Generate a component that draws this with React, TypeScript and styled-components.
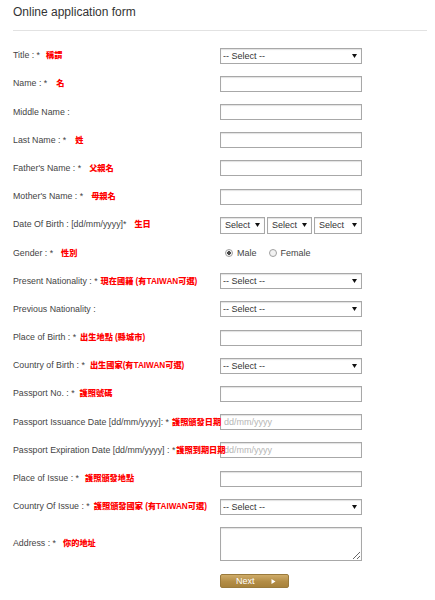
import React from 'react';
import styled, { createGlobalStyle } from 'styled-components';

const GlobalStyle = createGlobalStyle`
  html, body { margin: 0; padding: 0; background: #fff; }
  body {
    font-family: "Liberation Sans", Arial, "Noto Sans CJK TC", sans-serif;
    color: #444;
  }
`;

const Page = styled.div`
  width: 435px;
  box-sizing: border-box;
  padding: 0 8px 20px 13px;
`;

const Heading = styled.h2`
  margin: 0;
  padding: 4px 0 9px;
  font-size: 12px;
  line-height: 17px;
  font-weight: normal;
  color: #333;
  border-bottom: 1px solid #e2e2e2;
`;

const Form = styled.form`
  margin-top: 16.7px;
  display: flex;
  flex-direction: column;
  gap: 12.2px;
`;

const Row = styled.div`
  display: grid;
  grid-template-columns: 207px 142px;
  align-items: center;
  min-height: 16px;
`;

const Label = styled.label`
  position: relative;
  z-index: 1;
  font-size: 8.8px;
  line-height: 12px;
  white-space: nowrap;
  color: #444;
`;

const Note = styled.span<{ $gap: number }>`
  margin-left: ${(p) => p.$gap}px;
  color: #ff0000;
  font-weight: 900;
  font-size: 8.2px;
  font-family: "Liberation Sans", Arial, "Noto Sans CJK TC", sans-serif;
`;

const controlBase = `
  box-sizing: border-box;
  border: 1px solid #a8a8a8;
  box-shadow: inset 0 1px 1px rgba(0, 0, 0, 0.12);
  background: #fff;
  font-family: "Liberation Sans", Arial, sans-serif;
  font-size: 9px;
  color: #333;
  margin: 0;
  outline: none;
`;

const TextInput = styled.input`
  ${controlBase}
  width: 142px;
  height: 16px;
  padding: 0 3px;
  &::placeholder { color: #b5b5b5; }
`;

const TextArea = styled.textarea`
  ${controlBase}
  width: 142px;
  height: 34px;
  padding: 2px 3px;
  display: block;
`;

const SelectWrap = styled.div<{ $h?: number }>`
  position: relative;
  height: ${(p) => p.$h ?? 16}px;
  display: flex;
`;

const NativeSelect = styled.select<{ $pad: number }>`
  ${controlBase}
  appearance: none;
  -webkit-appearance: none;
  width: 100%;
  height: 100%;
  padding: 0 12px 0 ${(p) => p.$pad}px;
  border-radius: 0;
`;

const Arrow = styled.svg`
  position: absolute;
  right: 5px;
  top: 50%;
  margin-top: -2px;
  width: 5px;
  height: 4px;
  pointer-events: none;
`;

const DateGroup = styled.div`
  display: grid;
  grid-template-columns: 45px 45px 48px;
  gap: 2px;
  height: 16px;
  align-items: center;
`;

const RadioGroup = styled.div`
  display: flex;
  align-items: center;
  padding-left: 5px;
  font-size: 9px;
  color: #444;
`;

const RadioLabel = styled.label`
  display: flex;
  align-items: center;
  gap: 4px;
  margin-right: 12px;
`;

const Radio = styled.input`
  appearance: none;
  -webkit-appearance: none;
  margin: 0;
  width: 8px;
  height: 8px;
  border-radius: 50%;
  border: 1px solid #a0a0a0;
  background: #f2f2f2;
  box-sizing: border-box;
  &:checked {
    background: radial-gradient(circle, #4a4a4a 0 1.6px, #f2f2f2 2.1px);
  }
`;

const NextButton = styled.button`
  grid-column: 2;
  width: 69px;
  height: 14px;
  box-sizing: border-box;
  margin: 0;
  padding: 0 0 0 15px;
  display: flex;
  align-items: center;
  gap: 16px;
  border: 1px solid #9a7a3c;
  border-radius: 2px;
  background: linear-gradient(#cfac69, #b38d46 55%, #a7823b);
  color: #fff;
  font-family: "Liberation Sans", Arial, sans-serif;
  font-size: 9px;
  cursor: pointer;
`;

const Select = ({ text, h, pad = 2 }: { text: string; h?: number; pad?: number }) => (
  <SelectWrap $h={h}>
    <NativeSelect defaultValue="" $pad={pad}>
      <option value="">{text}</option>
    </NativeSelect>
    <Arrow viewBox="0 0 5 4">
      <path d="M0 0 H5 L2.5 4 Z" fill="#111" />
    </Arrow>
  </SelectWrap>
);

type Field = {
  en: string;
  zh?: string;
  gap?: number;
  kind: 'select' | 'text' | 'date';
};

const fields: Field[] = [
  { en: 'Title : *', zh: '稱謂', gap: 6, kind: 'select' },
  { en: 'Name : *', zh: '名', gap: 9, kind: 'text' },
  { en: 'Middle Name :', kind: 'text' },
  { en: 'Last Name : *', zh: '姓', gap: 9, kind: 'text' },
  { en: "Father's Name : *", zh: '父親名', gap: 8, kind: 'text' },
  { en: "Mother's Name : *", zh: '母親名', gap: 8, kind: 'text' },
];

const fields2: Field[] = [
  { en: 'Present Nationality : *', zh: '現在國籍 (有TAIWAN可選)', gap: 3, kind: 'select' },
  { en: 'Previous Nationality :', kind: 'select' },
  { en: 'Place of Birth : *', zh: '出生地點 (縣城市)', gap: 4, kind: 'text' },
  { en: 'Country of Birth : *', zh: '出生國家(有TAIWAN可選)', gap: 5, kind: 'select' },
  { en: 'Passport No. : *', zh: '護照號碼', gap: 5, kind: 'text' },
  { en: 'Passport Issuance Date [dd/mm/yyyy]: *', zh: '護照頒發日期', gap: 3, kind: 'date' },
  { en: 'Passport Expiration Date [dd/mm/yyyy] : *', zh: '護照到期日期', gap: 1, kind: 'date' },
  { en: 'Place of Issue : *', zh: '護照頒發地點', gap: 6, kind: 'text' },
  { en: 'Country Of Issue : *', zh: '護照頒發國家 (有TAIWAN可選)', gap: 4, kind: 'select' },
];

const renderControl = (kind: Field['kind']) => {
  if (kind === 'select') return <Select text="-- Select --" />;
  if (kind === 'date') return <TextInput placeholder="dd/mm/yyyy" />;
  return <TextInput />;
};

const FieldRow = ({ f }: { f: Field }) => (
  <Row>
    <Label>
      {f.en}
      {f.zh && <Note $gap={f.gap ?? 6}>{f.zh}</Note>}
    </Label>
    {renderControl(f.kind)}
  </Row>
);

export default function App() {
  return (
    <>
      <GlobalStyle />
      <Page>
        <Heading>Online application form</Heading>
        <Form onSubmit={(e) => e.preventDefault()}>
          {fields.map((f) => (
            <FieldRow key={f.en} f={f} />
          ))}
          <Row>
            <Label>
              Date Of Birth : [dd/mm/yyyy]*
              <Note $gap={8}>生日</Note>
            </Label>
            <DateGroup>
              <Select text="Select" h={17} pad={4} />
              <Select text="Select" h={17} pad={4} />
              <Select text="Select" h={17} pad={4} />
            </DateGroup>
          </Row>
          <Row>
            <Label>
              Gender : *<Note $gap={8}>性別</Note>
            </Label>
            <RadioGroup>
              <RadioLabel>
                <Radio type="radio" name="gender" defaultChecked />
                Male
              </RadioLabel>
              <RadioLabel>
                <Radio type="radio" name="gender" />
                Female
              </RadioLabel>
            </RadioGroup>
          </Row>
          {fields2.map((f) => (
            <FieldRow key={f.en} f={f} />
          ))}
          <Row>
            <Label>
              Address : *<Note $gap={7}>你的地址</Note>
            </Label>
            <TextArea />
          </Row>
          <Row>
            <NextButton type="button">
              Next
              <svg width="5" height="5" viewBox="0 0 5 5">
                <path d="M0.5 0 L4.5 2.5 L0.5 5 Z" fill="#fff" />
              </svg>
            </NextButton>
          </Row>
        </Form>
      </Page>
    </>
  );
}
